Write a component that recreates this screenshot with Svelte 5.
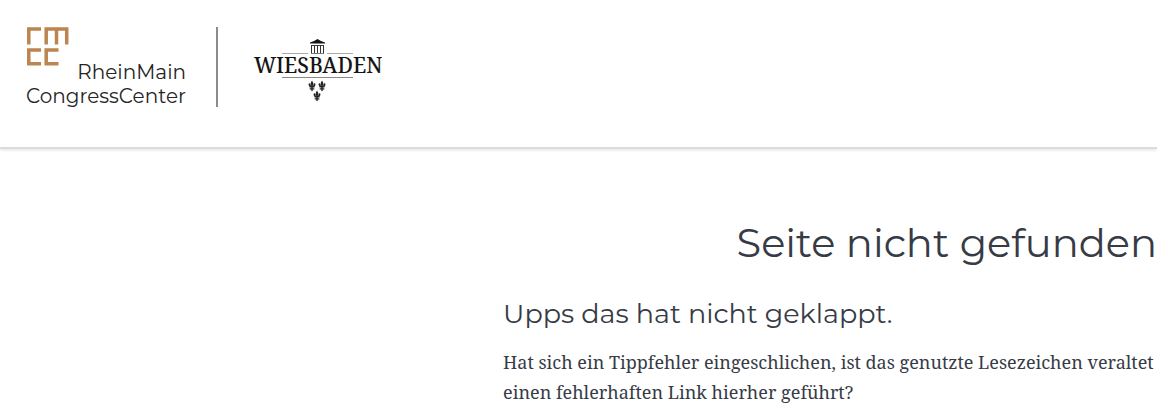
<script>
  const title = "Seite nicht gefunden";
  const subtitle = "Upps das hat nicht geklappt.";
  const lilies = [
    { x: 312, y: 81 },
    { x: 322, y: 81 },
    { x: 317, y: 91 }
  ];
</script>

<header>
  <a class="brand" href="/" aria-label="RheinMain CongressCenter">
    <svg class="mark" width="43" height="39" viewBox="0 0 43 39" fill="none" stroke="#bd8450" stroke-width="3.500" aria-hidden="true">
      <path d="M2.800 17.500V2H15M20.200 17.500V2h20.500v15.500M30.500 2v15.500" />
      <path d="M15 23H2.800v13.800H15M32.500 23H20.200v13.800h12.300" />
    </svg>
    <span>RheinMain</span>
    <span>CongressCenter</span>
  </a>
  <a class="city" href="/wiesbaden" aria-label="Wiesbaden">
    <svg width="130" height="64" viewBox="252 38 130 64" aria-hidden="true">
      <path fill="#151515" d="M310 42.500q4-1 7.500-3.500q3.500 2.500 7.500 3.500v1h-15z" />
      <path stroke="#444" stroke-width="1" d="M311 45.500h13" />
      <path stroke="#333" stroke-width="1" d="M311.500 45v9M314.500 45v9M317.500 45v9M320.500 45v9M323.500 45v9" />
      <path stroke="#777" stroke-width="1" d="M311 53.500h13" />
      <path stroke="#aaa" d="M282 53.500h26M327 53.500h26" />
      <path stroke="#888" d="M282 77.500h71" />
      <text x="254" y="73">WIESBADEN</text>
      {#each lilies as lily}
        <g transform="translate({lily.x} {lily.y})" fill="#222">
          <path d="M0-.5L1.300 2L.8 5h-1.600L-1.300 2z" />
          <path d="M-1 5.500L-1.500 3L-3 2L-3.500 4L-2.500 5.500zM1 5.500L1.500 3L3 2L3.500 4L2.500 5.500z" />
          <path d="M-2.500 5h5v1.400h-5zM-.7 6h1.400v4h-1.400zM-2.300 7.200h4.600v1.300h-4.600z" />
        </g>
      {/each}
    </svg>
  </a>
</header>

<main>
  <h1>{title}</h1>
  <h2>{subtitle}</h2>
  <p>
    Hat sich ein Tippfehler eingeschlichen, ist das genutzte Lesezeichen veraltet<br />
    einen fehlerhaften Link hierher geführt?
  </p>
</main>

<style>
  :global(body) {
    margin: 0;
    background: #fff;
    color: #363b46;
    overflow: hidden;
  }

  header {
    display: flex;
    align-items: flex-start;
    padding: 27px 26px 40px;
    border-bottom: 2px solid #dcdcdc;
    box-shadow: 0 1px 3px rgba(0, 0, 0, 0.12);
  }

  a {
    color: inherit;
    text-decoration: none;
  }

  .brand {
    display: flex;
    flex-direction: column;
    align-items: flex-end;
    padding-right: 30px;
    border-right: 2px solid #8b8b8b;
    color: #252525;
    font: 20px/24px "Montserrat", "Lato", sans-serif;
  }

  .mark {
    align-self: flex-start;
    margin-bottom: -6px;
  }

  .brand span:last-child {
    margin-bottom: -1px;
  }

  .city {
    padding: 11px 0 0 34px;
  }

  .city svg {
    display: block;
  }

  .city text {
    font: 500 21px "Noto Serif", "Liberation Serif", serif;
    fill: #151515;
  }

  main {
    padding: 64px 0 0 503px;
    white-space: nowrap;
  }

  h1,
  h2 {
    margin: 0;
    font-family: "Montserrat", "Inter", sans-serif;
    font-weight: 400;
  }

  h1 {
    font-size: 40px;
    line-height: 60px;
    text-align: right;
  }

  h2 {
    margin-top: 21px;
    font-size: 27px;
    line-height: 40px;
  }

  p {
    margin: 13px 0 0;
    font: 18px/30px "Noto Serif", "DejaVu Serif Condensed", "DejaVu Serif", serif;
  }
</style>
